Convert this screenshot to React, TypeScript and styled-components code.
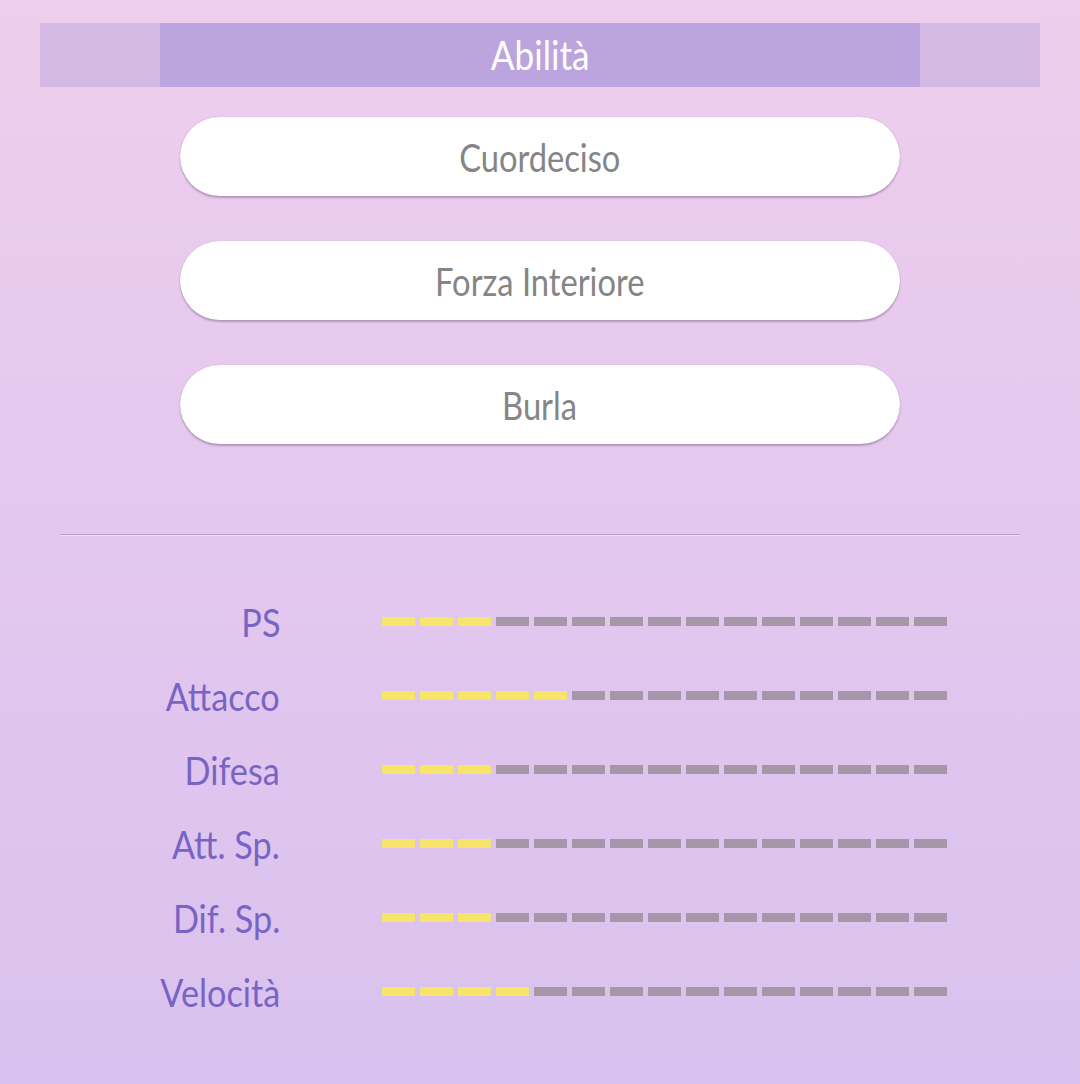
import React from "react";
import styled, { createGlobalStyle } from "styled-components";

const Global = createGlobalStyle`
  html, body { margin: 0; padding: 0; }
  body {
    width: 1080px;
    height: 1084px;
    overflow: hidden;
    background: linear-gradient(180deg, #eeceec 0%, #e8caee 30%, #e1c6ee 60%, #d9c2ef 100%);
    font-family: "Liberation Sans Narrow", "Lato", "Noto Sans", sans-serif;
  }
`;

const Page = styled.div`
  width: 1080px;
  height: 1084px;
  box-sizing: border-box;
  padding-top: 23px;
  display: flex;
  flex-direction: column;
  align-items: center;
`;

const HeaderBar = styled.div`
  width: 1000px;
  height: 64px;
  background: #d3b9e4;
  display: flex;
  justify-content: center;
`;

const HeaderInner = styled.div`
  width: 760px;
  height: 100%;
  background: #bca5de;
  display: flex;
  align-items: center;
  justify-content: center;
`;

const Narrow = styled.span<{ $size: number; $scale?: number }>`
  display: inline-block;
  font-size: ${(p) => p.$size}px;
  transform: scaleX(${(p) => p.$scale ?? 0.86});
  white-space: nowrap;
`;

const HeaderTitle = styled(Narrow)`
  color: #ffffff;
`;

const Abilities = styled.div`
  margin-top: 30px;
  display: flex;
  flex-direction: column;
  gap: 45px;
`;

const AbilityButton = styled.div`
  width: 720px;
  height: 79px;
  border-radius: 40px;
  background: #ffffff;
  box-shadow: 0 2px 2px rgba(140, 110, 150, 0.55), 0 0 1px rgba(150, 120, 160, 0.5);
  display: flex;
  align-items: center;
  justify-content: center;
  color: #858585;
`;

const Divider = styled.div`
  margin-top: 90px;
  width: 960px;
  height: 1px;
  background: #b8a0bf;
  box-shadow: 0 1px 0 rgba(255, 240, 255, 0.5);
`;

const Stats = styled.div`
  margin-top: 49px;
  width: 1080px;
  display: grid;
  grid-template-columns: 280px 1fr;
  grid-auto-rows: 74px;
  column-gap: 102px;
  align-items: center;
`;

const StatLabel = styled.div`
  text-align: right;
  color: #7964c4;
  display: flex;
  justify-content: flex-end;
`;

const LabelText = styled(Narrow)`
  transform-origin: right center;
  padding-top: 2px;
`;

const Bar = styled.div`
  display: flex;
  gap: 5px;
`;

const Segment = styled.div<{ $on: boolean }>`
  width: 33px;
  height: 9px;
  background: ${(p) => (p.$on ? "#f7e46a" : "#a697a8")};
`;

const abilities = ["Cuordeciso", "Forza Interiore", "Burla"];

const stats: [string, number][] = [
  ["PS", 3],
  ["Attacco", 5],
  ["Difesa", 3],
  ["Att. Sp.", 3],
  ["Dif. Sp.", 3],
  ["Velocità", 4],
];

export default function App() {
  return (
    <>
      <Global />
      <Page>
        <HeaderBar>
          <HeaderInner>
            <HeaderTitle $size={40} $scale={0.88}>Abilità</HeaderTitle>
          </HeaderInner>
        </HeaderBar>
        <Abilities>
          {abilities.map((a) => (
            <AbilityButton key={a}>
              <Narrow $size={38}>{a}</Narrow>
            </AbilityButton>
          ))}
        </Abilities>
        <Divider />
        <Stats>
          {stats.map(([name, v]) => (
            <React.Fragment key={name}>
              <StatLabel>
                <LabelText $size={38} $scale={0.9}>{name}</LabelText>
              </StatLabel>
              <Bar>
                {Array.from({ length: 15 }).map((_, i) => (
                  <Segment key={i} $on={i < v} />
                ))}
              </Bar>
            </React.Fragment>
          ))}
        </Stats>
      </Page>
    </>
  );
}
